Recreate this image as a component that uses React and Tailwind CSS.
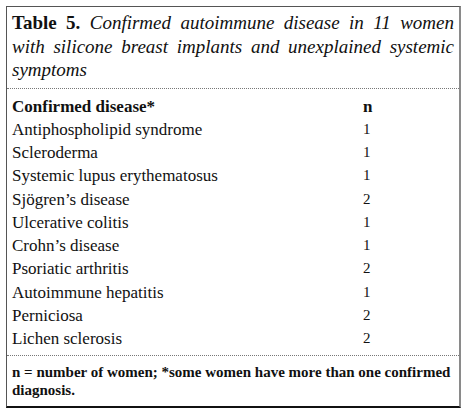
import React from 'react';

const rows = [
  ['Antiphospholipid syndrome', '1'],
  ['Scleroderma', '1'],
  ['Systemic lupus erythematosus', '1'],
  ['Sjögren’s disease', '2'],
  ['Ulcerative colitis', '1'],
  ['Crohn’s disease', '1'],
  ['Psoriatic arthritis', '2'],
  ['Autoimmune hepatitis', '1'],
  ['Perniciosa', '2'],
  ['Lichen sclerosis', '2'],
];

const serif = { fontFamily: '"Liberation Serif", "DejaVu Serif", serif' };

const App = () => {
  return (
    <div className="w-[467px] h-[415px] bg-white pt-[6px] pl-[6px]" style={serif}>
      <div className="w-[455px] border-l border-t border-[#555] border-r-2 border-r-[#8a8a8a] border-b-2 border-b-[#111] text-[#111]">
        <div className="px-[5px] pt-[4px] pb-[6px] text-[19px] leading-[23.5px] text-justify">
          <span className="font-bold">Table 5.</span>{' '}
          <i>Confirmed autoimmune disease in 11 women with silicone breast implants and unexplained systemic symptoms</i>
        </div>

        <div className="border-t border-dotted border-[#777] px-[5px] pt-[6px] pb-[5px] text-[17px] leading-[23.25px]">
          <div className="grid grid-cols-[351px_1fr] font-bold">
            <span>Confirmed disease*</span>
            <span>n</span>
          </div>
          {rows.map(([name, n]) => (
            <div key={name} className="grid grid-cols-[351px_1fr]">
              <span>{name}</span>
              <span className="text-[15px]">{n}</span>
            </div>
          ))}
        </div>

        <div className="border-t border-dotted border-[#777] px-[5px] pt-[7px] pb-[7px] text-[15px] leading-[18px] font-bold">
          n = number of women; *some women have more than one confirmed diagnosis.
        </div>
      </div>
    </div>
  );
};

export default App;
